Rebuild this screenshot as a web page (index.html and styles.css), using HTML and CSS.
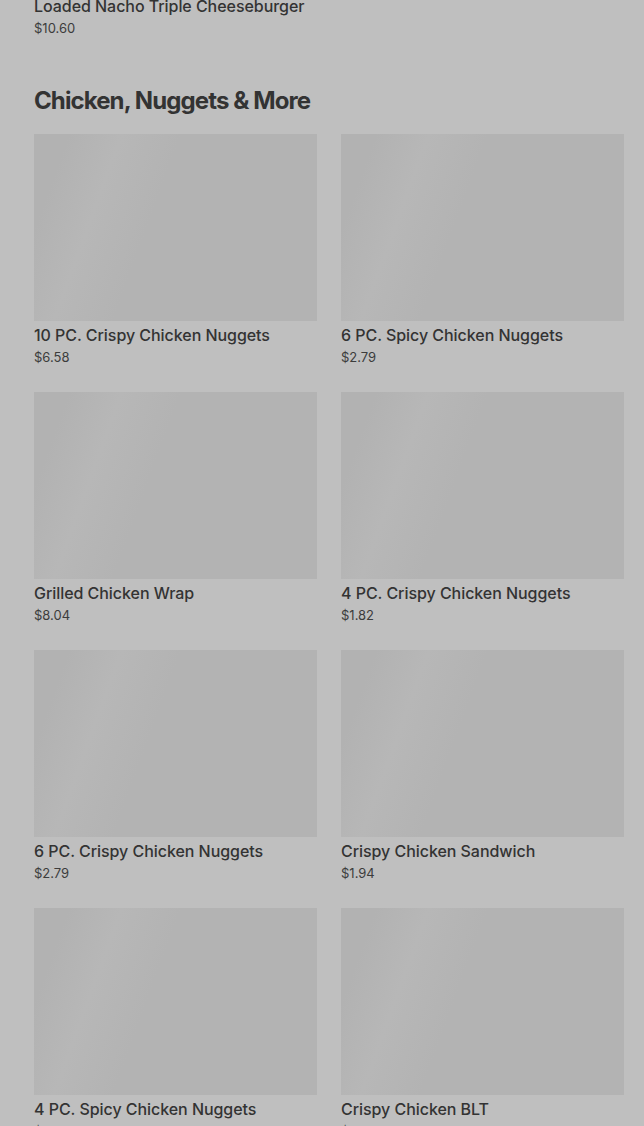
FILE: index.html
```html
<!DOCTYPE html>
<html>
	<head>
		<meta charset="UTF-8">
		<title>Menu</title>
		<link rel="stylesheet" href="styles.css">
	</head>
	<body>
		<div class="page">
			<div class="prev-item">
				<div class="item-name">Loaded Nacho Triple Cheeseburger</div>
				<div class="item-price">$10.60</div>
			</div>

			<section class="section">
				<h2 class="section-title">Chicken, Nuggets &amp; More</h2>
				<ul class="grid">
					<li class="card">
						<div class="thumb"></div>
						<div class="item-name">10 PC. Crispy Chicken Nuggets</div>
						<div class="item-price">$6.58</div>
					</li>
					<li class="card">
						<div class="thumb"></div>
						<div class="item-name">6 PC. Spicy Chicken Nuggets</div>
						<div class="item-price">$2.79</div>
					</li>
					<li class="card">
						<div class="thumb"></div>
						<div class="item-name">Grilled Chicken Wrap</div>
						<div class="item-price">$8.04</div>
					</li>
					<li class="card">
						<div class="thumb"></div>
						<div class="item-name">4 PC. Crispy Chicken Nuggets</div>
						<div class="item-price">$1.82</div>
					</li>
					<li class="card">
						<div class="thumb"></div>
						<div class="item-name">6 PC. Crispy Chicken Nuggets</div>
						<div class="item-price">$2.79</div>
					</li>
					<li class="card">
						<div class="thumb"></div>
						<div class="item-name">Crispy Chicken Sandwich</div>
						<div class="item-price">$1.94</div>
					</li>
					<li class="card">
						<div class="thumb"></div>
						<div class="item-name">4 PC. Spicy Chicken Nuggets</div>
						<div class="item-price">$2.29</div>
					</li>
					<li class="card">
						<div class="thumb"></div>
						<div class="item-name">Crispy Chicken BLT</div>
						<div class="item-price">$3.49</div>
					</li>
				</ul>
			</section>
		</div>
	</body>
</html>
```

FILE: styles.css
```css
html,
body {
	margin: 0;
	padding: 0;
	background-color: #bfbfbf;
}

body {
	font-family: Inter, "Noto Sans", sans-serif;
	color: #333333;
	overflow: hidden;
}

.page {
	padding: 0 20px 0 34px;
}

.prev-item {
	margin-top: -6px;
}

.item-name {
	font-size: 16px;
	line-height: 24px;
	font-weight: 500;
	letter-spacing: -0.05px;
	color: #333333;
}

.item-price {
	font-size: 13px;
	line-height: 20px;
	color: #3c3c3c;
}

.section {
	margin-top: 47px;
}

.section-title {
	margin: 0 0 17px;
	font-size: 24px;
	line-height: 32px;
	font-weight: 700;
	letter-spacing: -0.9px;
	color: #333333;
}

.grid {
	margin: 0;
	padding: 0;
	list-style: none;
	display: grid;
	grid-template-columns: 1fr 1fr;
	column-gap: 24px;
	row-gap: 25px;
}

.thumb {
	height: 187px;
	margin-bottom: 2px;
	background: linear-gradient(110deg, #b2b2b2 0%, #b2b2b2 10%, #b7b7b7 25%, #b3b3b3 42%, #b3b3b3 100%);
}
```
